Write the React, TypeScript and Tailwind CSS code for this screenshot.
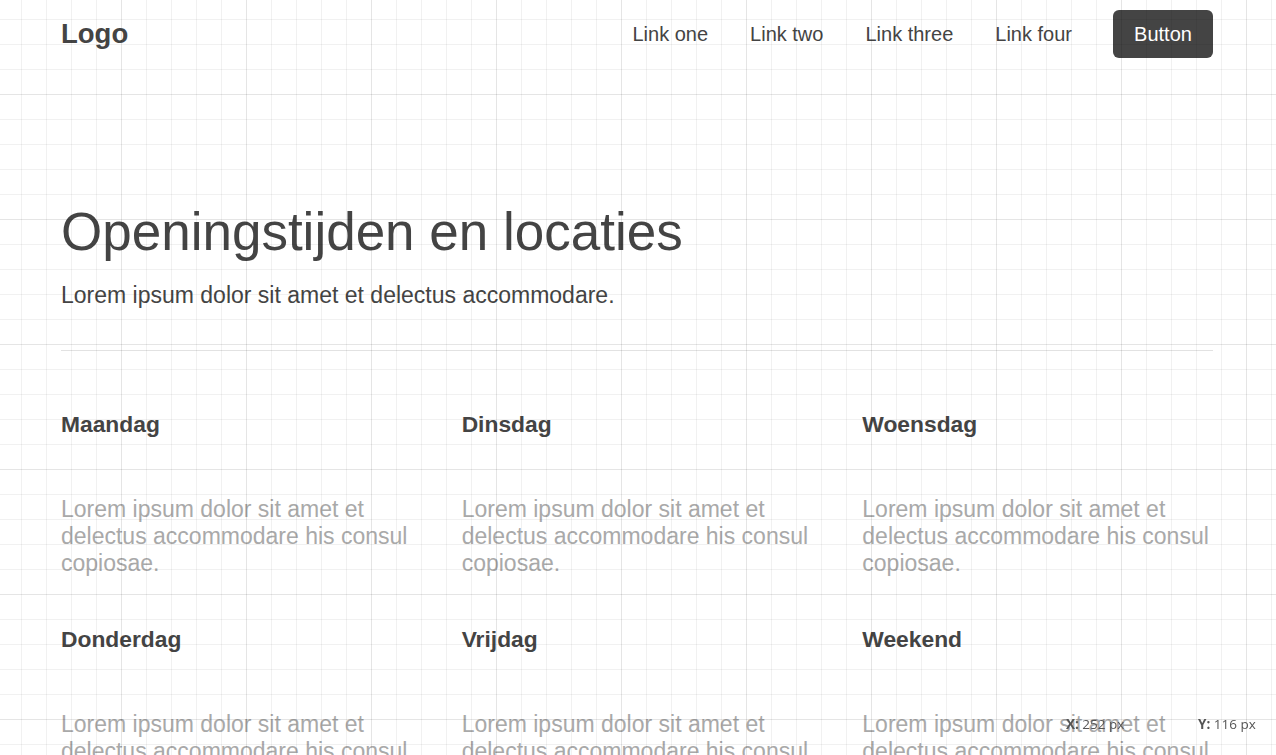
import React from "react";

const days = ["Maandag", "Dinsdag", "Woensdag", "Donderdag", "Vrijdag", "Weekend"];

export default function App() {
  return (
    <div className="relative min-h-screen bg-white text-[#444] font-['Liberation_Sans',Arial,sans-serif]">
      <div className="ml-[61px] w-[1152px]">
        <nav className="flex h-[68px] items-center justify-between">
          <div className="text-[27.5px] font-bold leading-none">Logo</div>
          <div className="flex items-center">
            <div className="flex items-center gap-[42px] text-[20px] leading-none">
              <a>Link one</a>
              <a>Link two</a>
              <a>Link three</a>
              <a>Link four</a>
            </div>
            <button className="ml-[41px] flex h-[48px] w-[100px] items-center justify-center rounded-[6px] bg-[#444] text-[20px] text-white">
              Button
            </button>
          </div>
        </nav>

        <header className="pt-[132px]">
          <h1 className="text-[53px] leading-[1.2]">Openingstijden en locaties</h1>
          <p className="mt-[18px] text-[23px] leading-[1.2]">
            Lorem ipsum dolor sit amet et delectus accommodare.
          </p>
        </header>

        <div className="mt-[41px] h-px bg-[#e2e2e2]" />

        <div className="mt-[60px] grid grid-cols-3 gap-x-[50px] gap-y-[49px]">
          {days.map((d) => (
            <div key={d}>
              <h3 className="text-[22.8px] font-bold leading-[27px]">{d}</h3>
              <p className="mt-[58px] text-[23px] leading-[27px] text-[#a9a9a9]">
                Lorem ipsum dolor sit amet et delectus accommodare his consul copiosae.
              </p>
            </div>
          ))}
        </div>
      </div>

      <div className="pointer-events-none fixed inset-0 z-10 bg-[linear-gradient(to_right,rgba(0,0,0,0.05)_1px,transparent_1px),linear-gradient(to_bottom,rgba(0,0,0,0.05)_1px,transparent_1px),linear-gradient(to_right,rgba(0,0,0,0.055)_1px,transparent_1px),linear-gradient(to_bottom,rgba(0,0,0,0.055)_1px,transparent_1px)] bg-size-[125px_125px,125px_125px,25px_25px,25px_25px] bg-position-[-4px_-31px,-4px_-31px,-4px_-6px,-4px_-6px]" />

      <div className="pointer-events-none fixed bottom-[24px] left-[1066px] z-20 text-[13.5px] leading-none text-[#555] font-['Open_Sans',sans-serif]">
        <span className="font-bold">X:</span> 252 px
      </div>
      <div className="pointer-events-none fixed bottom-[24px] left-[1198px] z-20 text-[13.5px] leading-none text-[#555] font-['Open_Sans',sans-serif]">
        <span className="font-bold">Y:</span> 116 px
      </div>
    </div>
  );
}
